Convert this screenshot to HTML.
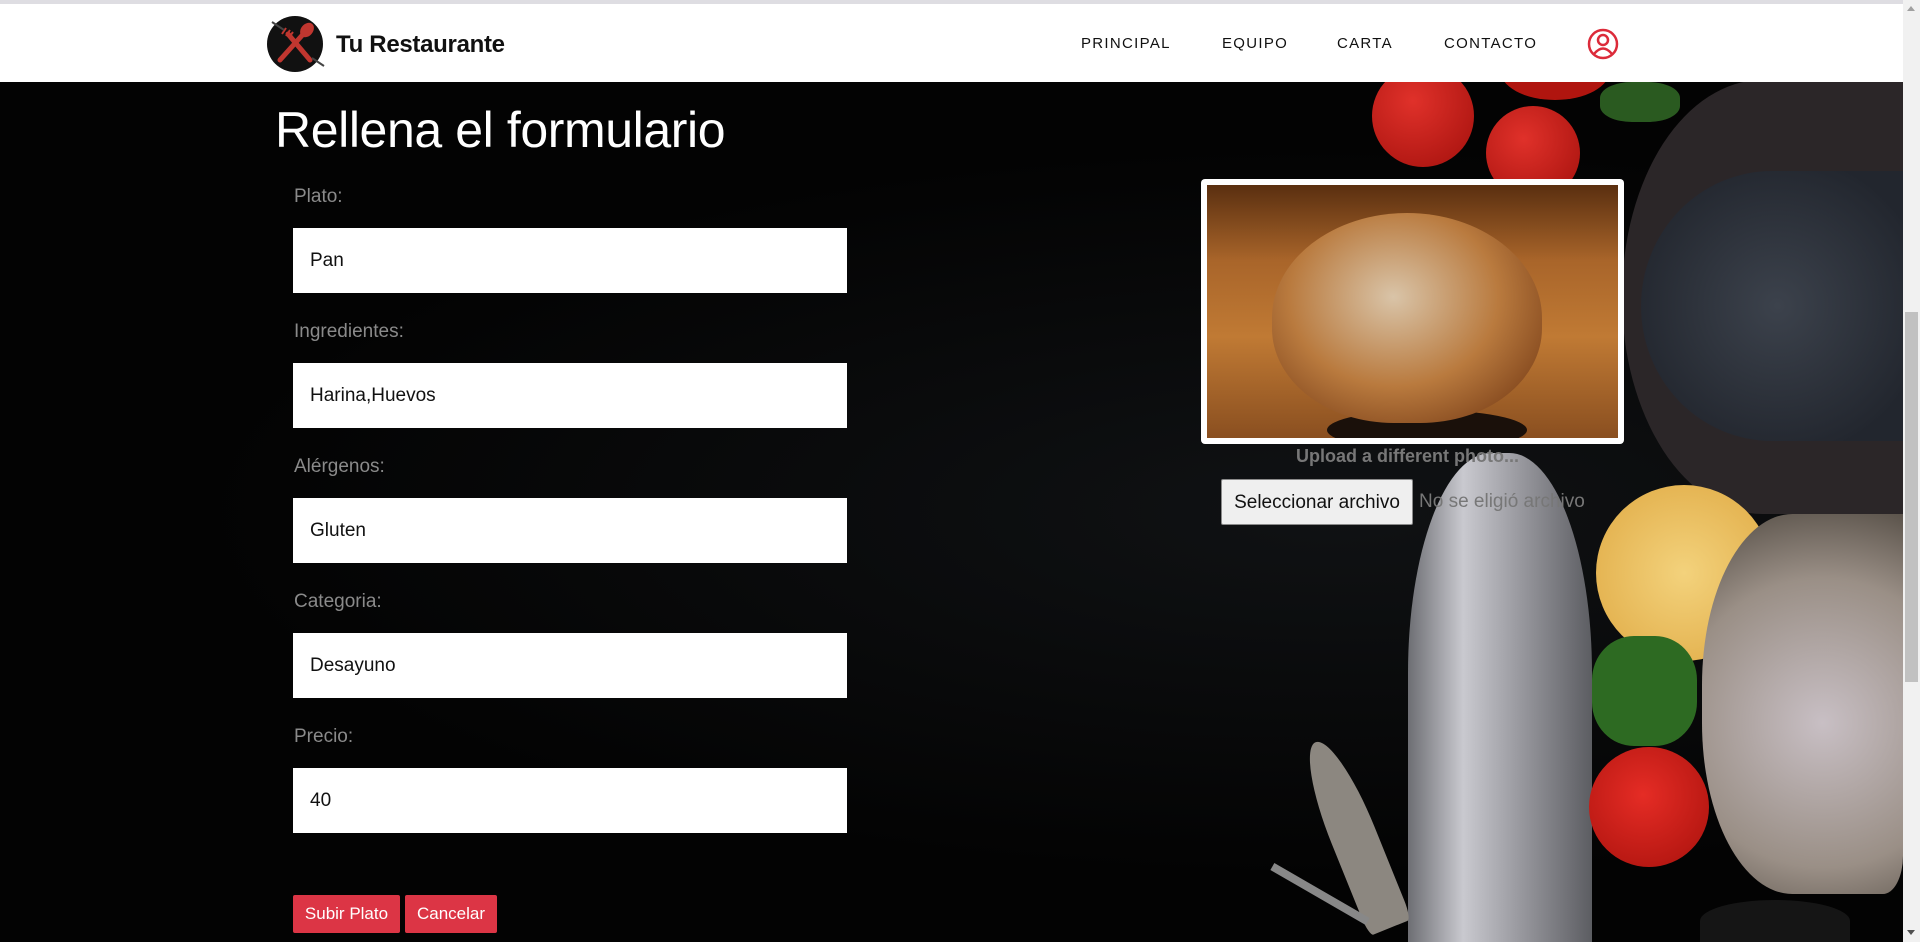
<!DOCTYPE html>
<html style="overflow:hidden;width:1920px;height:942px"><head><meta charset="utf-8"><style>
*{margin:0;padding:0;box-sizing:border-box}
body{width:1920px;height:942px;overflow:hidden;background:#030303;font-family:"Liberation Sans",sans-serif}
#w{position:relative;width:1920px;height:942px;overflow:hidden}
.abs{position:absolute}
header{position:absolute;left:0;top:0;width:1903px;height:82px;background:#fff;border-top:4px solid #dedde2}
.brand{position:absolute;left:336px;top:27px;font-size:24px;font-weight:bold;color:#111;letter-spacing:-0.3px}
.nav{position:absolute;top:31px;font-size:15px;letter-spacing:1.3px;color:#111}
h1{position:absolute;left:275px;top:101px;font-size:50px;font-weight:normal;color:#fff;letter-spacing:-0.4px}
.lbl{position:absolute;left:294px;font-size:19px;color:#8a8a8a}
.inp{position:absolute;left:293px;width:554px;height:65px;background:#fff;font-size:19px;color:#111;padding:22px 0 0 17px}
.btn{position:absolute;top:895px;height:38px;background:#dc3545;color:#fff;font-size:17px;padding:9px 0 0;text-align:center;border-radius:2px}
.circ{position:absolute;border-radius:50%}
</style></head><body><div id="w">
<div class="abs" style="left:0;top:82px;width:1903px;height:860px;background:radial-gradient(ellipse at 70% 50%,#101214,#030303 60%)"></div>
<div class="circ" style="left:1622px;top:80px;width:281px;height:434px;background:#2b2628;border-radius:50% 0 0 50%"></div>
<div class="circ" style="left:1641px;top:171px;width:262px;height:270px;background:radial-gradient(circle at 52% 50%,#3c424c,#22262e 80%);border-radius:50% 0 0 50%"></div>
<div class="circ" style="left:1372px;top:65px;width:102px;height:102px;background:radial-gradient(circle at 40% 35%,#e0312a,#a3100c)"></div>
<div class="circ" style="left:1486px;top:106px;width:94px;height:94px;background:radial-gradient(circle at 40% 35%,#e0312a,#a3100c)"></div>
<div class="circ" style="left:1500px;top:40px;width:110px;height:60px;background:#b0150f"></div>
<div class="abs" style="left:1600px;top:82px;width:80px;height:40px;background:#2a5a20;border-radius:40%"></div>
<div class="abs" style="left:1408px;top:453px;width:184px;height:489px;border-radius:45% 45% 0 0;background:linear-gradient(90deg,#6d6e73,#c9c9cf 30%,#9a9aa0 60%,#5c5d62)"></div>
<div class="circ" style="left:1596px;top:485px;width:176px;height:176px;background:radial-gradient(circle,#f3d27c,#e3b14e 80%,#f0e2b0 92%)"></div>
<div class="abs" style="left:1592px;top:636px;width:105px;height:110px;border-radius:40%;background:#2d6a22"></div>
<div class="circ" style="left:1589px;top:747px;width:120px;height:120px;background:radial-gradient(circle at 45% 40%,#e52c25,#a8110c)"></div>
<div class="abs" style="left:1702px;top:514px;width:201px;height:380px;border-radius:45% 0 10% 45%;background:radial-gradient(circle at 60% 55%,#c8bfc4,#9a8f86 60%,#4d463e)"></div>
<div class="abs" style="left:1330px;top:735px;width:46px;height:200px;border-radius:50% 50% 10% 10%;background:#8c8780;transform:rotate(-22deg)"></div>
<div class="abs" style="left:1265px;top:890px;width:110px;height:8px;background:#888;transform:rotate(30deg)"></div>
<div class="abs" style="left:1700px;top:900px;width:150px;height:42px;background:#151515;border-radius:50% 50% 0 0"></div>
<header>
<svg class="abs" style="left:266px;top:10px" width="60" height="60" viewBox="0 0 60 60">
<circle cx="29" cy="30" r="28" fill="#111"/>
<path d="M14 46 L40 17" stroke="#c0362f" stroke-width="5" stroke-linecap="round"/>
<ellipse cx="41" cy="16" rx="6" ry="8" fill="#c0362f" transform="rotate(40 41 16)"/>
<path d="M44 46 L22 20" stroke="#c0362f" stroke-width="5" stroke-linecap="round"/>
<path d="M16 20 l4 -6 M20 22 l4 -6 M24 22 l3 -4" stroke="#c0362f" stroke-width="2"/>
<path d="M6 8 l12 8 M46 44 l12 8" stroke="#444" stroke-width="2"/>
</svg>
<div class="brand">Tu Restaurante</div>
<div class="nav" style="left:1081px">PRINCIPAL</div>
<div class="nav" style="left:1222px">EQUIPO</div>
<div class="nav" style="left:1337px">CARTA</div>
<div class="nav" style="left:1444px">CONTACTO</div>
<svg class="abs" style="left:1587px;top:24px" width="32" height="32" viewBox="0 0 32 32">
<circle cx="16" cy="16" r="14" fill="none" stroke="#dc2b3a" stroke-width="2.5"/>
<circle cx="16" cy="12" r="5" fill="none" stroke="#dc2b3a" stroke-width="2.5"/>
<path d="M7 26 Q16 15 25 26" fill="none" stroke="#dc2b3a" stroke-width="2.5"/>
</svg>
</header>
<h1>Rellena el formulario</h1>
<div class="lbl" style="top:186px">Plato:</div><div class="inp" style="top:228px">Pan</div>
<div class="lbl" style="top:321px">Ingredientes:</div><div class="inp" style="top:363px">Harina,Huevos</div>
<div class="lbl" style="top:456px">Alérgenos:</div><div class="inp" style="top:498px">Gluten</div>
<div class="lbl" style="top:591px">Categoria:</div><div class="inp" style="top:633px">Desayuno</div>
<div class="lbl" style="top:726px">Precio:</div><div class="inp" style="top:768px">40</div>
<div class="btn" style="left:293px;width:107px">Subir Plato</div>
<div class="btn" style="left:405px;width:92px">Cancelar</div>
<div class="abs" style="left:1201px;top:179px;width:423px;height:265px;background:#fff;border-radius:4px;padding:6px">
<div style="width:100%;height:100%;background:linear-gradient(180deg,#5a2f10,#a9652a 30%,#c07a34 60%,#8a4f20);position:relative;overflow:hidden">
<div class="abs" style="left:120px;top:225px;width:200px;height:40px;background:#1a100a;border-radius:50%"></div>
<div class="abs" style="left:65px;top:28px;width:270px;height:210px;border-radius:50% 50% 45% 45%;background:radial-gradient(ellipse at 45% 40%,#d9c4a8,#b97a3e 50%,#7a3f18 88%)"></div>
</div></div>
<div class="abs" style="left:1296px;top:446px;font-size:18px;font-weight:bold;color:#777">Upload a different photo...</div>
<div class="abs" style="left:1221px;top:479px;width:192px;height:46px;background:#efefef;border:1px solid #8a8a8a;border-radius:2px;font-size:19px;color:#111;text-align:center;padding-top:12px">Seleccionar archivo</div>
<div class="abs" style="left:1419px;top:491px;font-size:19px;color:#777">No se eligió archivo</div>
<div class="abs" style="left:1903px;top:0;width:17px;height:942px;background:#f1f1f1"></div>
<div class="abs" style="left:1905px;top:312px;width:13px;height:370px;background:#c1c1c1"></div>
<div class="abs" style="left:1907px;top:930px;width:0;height:0;border-left:4px solid transparent;border-right:4px solid transparent;border-top:5px solid #505050"></div>
<div class="abs" style="left:1907px;top:6px;width:0;height:0;border-left:4px solid transparent;border-right:4px solid transparent;border-bottom:5px solid #a0a0a0"></div>
</div></body></html>
